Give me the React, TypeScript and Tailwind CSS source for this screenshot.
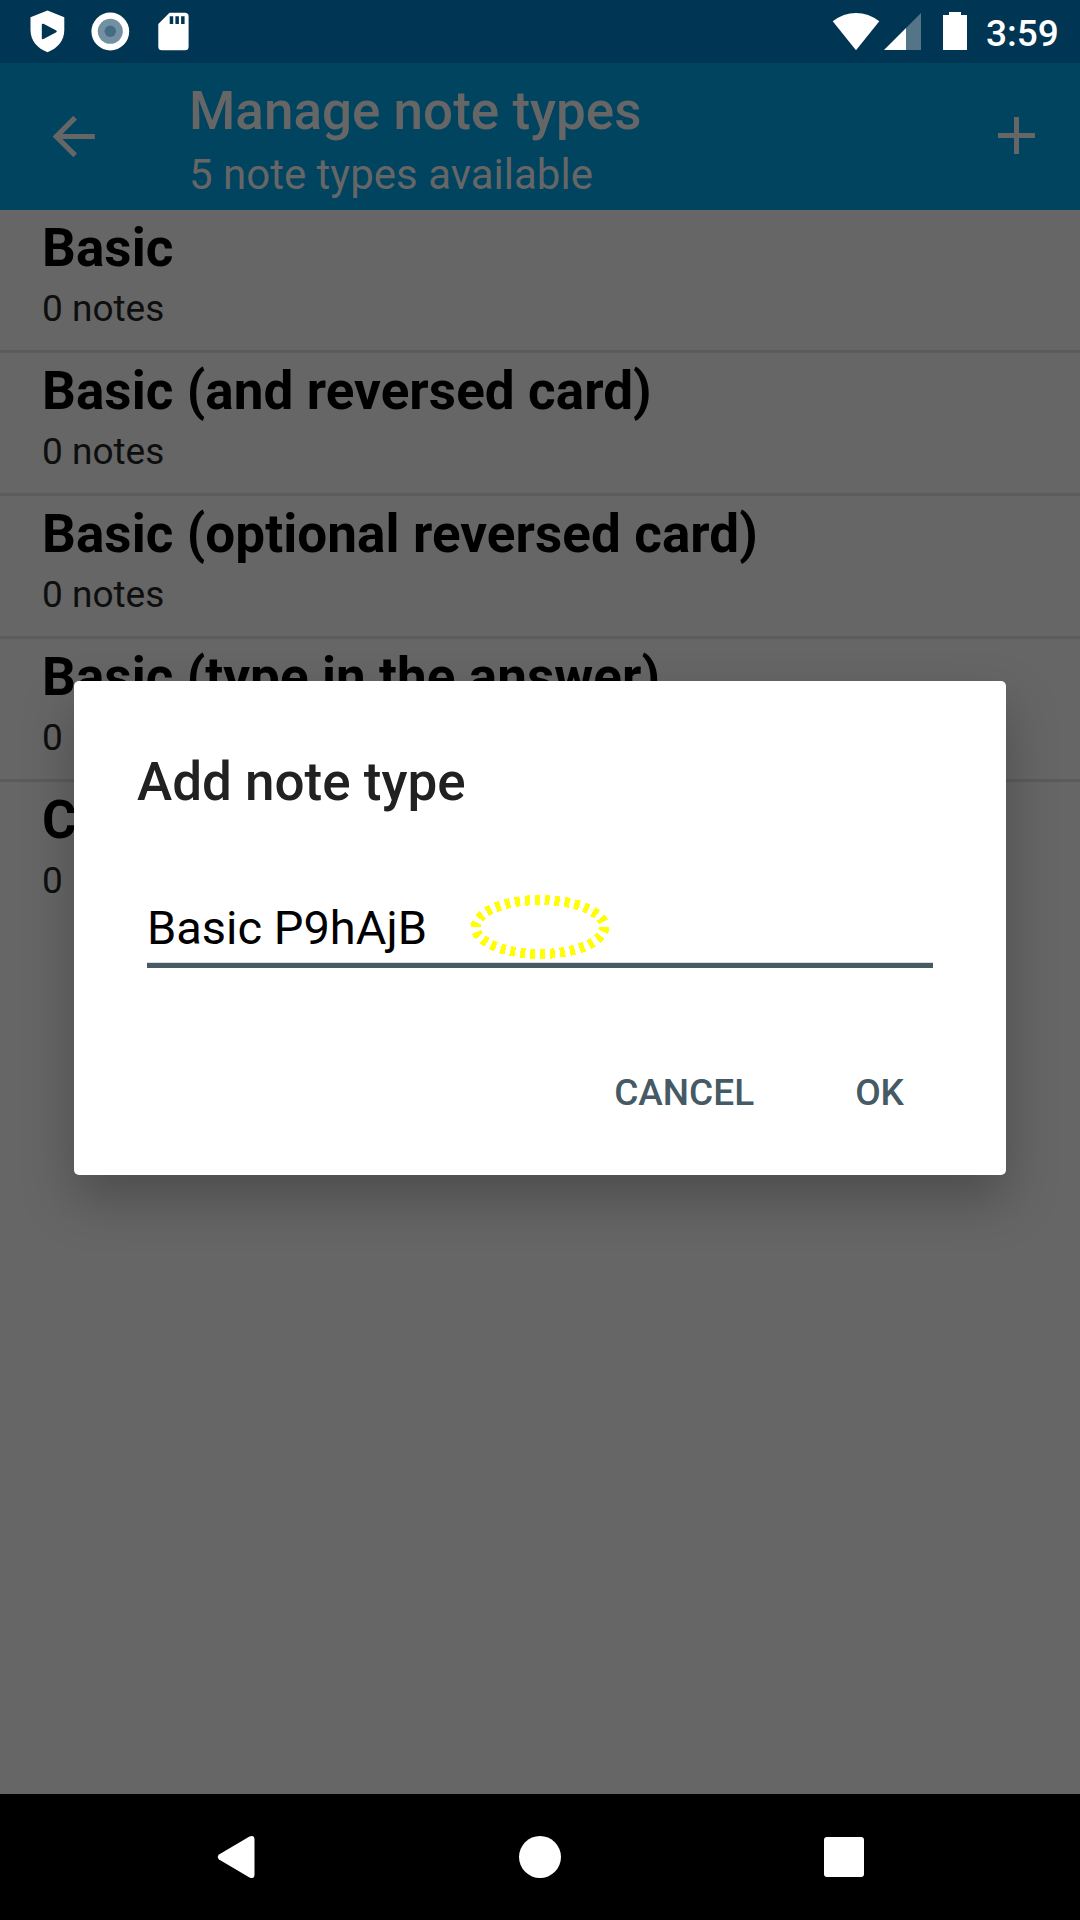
const noteTypes = [
  'Basic',
  'Basic (and reversed card)',
  'Basic (optional reversed card)',
  'Basic (type in the answer)',
  'Cloze',
];

function StatusBar() {
  return (
    <div className="flex h-[63px] shrink-0 items-center bg-[#003553] text-white">
      <svg className="h-[63px] w-[200px]" viewBox="0 0 200 63" fill="none">
        <path
          fillRule="evenodd"
          fill="#fff"
          d="M47.5 10.5 64.3 17.3V30C64.3 40.500 57.500 48.500 47.500 52.200C37.500 48.500 30.500 40.500 30.500 30V17.300ZM41.800 24.500V38.300Q42.200 39.500 43.500 39L56.300 32.300Q57.300 31.400 56.300 30.500L43.500 23.800Q42.200 23.300 41.800 24.500Z"
        />
        <circle cx="110.3" cy="31.500" r="18.900" fill="#fff" />
        <circle cx="110.3" cy="31.300" r="12.500" fill="#7290a2" />
        <circle cx="110.3" cy="31.300" r="5.700" fill="#456c84" />
        <path
          fillRule="evenodd"
          fill="#fff"
          d="M169.500 12.700H185Q188.600 12.700 188.600 16.300V46.700Q188.600 50.300 185 50.300H162Q158.300 50.300 158.300 46.700V24ZM169.700 16.300V24H173.200V16.300ZM175.400 16.300V24H178.900V16.300ZM181.100 16.300V24H184.600V16.300Z"
        />
      </svg>
      <svg className="ml-auto h-[63px] w-[140px]" viewBox="830 0 140 63">
        <path fill="#fff" d="M832.700 21.300Q843.500 13 856 13T879.300 21.300L856 50.300Z" />
        <path fill="#547588" d="M921 13V50H906V28Z" />
        <path fill="#fff" d="M884 50 906 28V50Z" />
        <path fill="#fff" d="M949 12H961V15H967V50H943V15H949Z" />
      </svg>
      <span className="ml-[16px] w-[94px] pt-[4px] text-[37px] leading-[43px] font-medium">3:59</span>
    </div>
  );
}

function AppBar() {
  return (
    <header className="flex h-[147px] shrink-0 bg-[#004460] text-[#666]">
      <svg className="h-[147px] w-[189px]" viewBox="0 63 189 147" fill="none" stroke="#666" strokeWidth="5.200">
        <path d="M94.800 136.500H58M75.200 117.600 56.300 136.500 75.200 155.400" />
      </svg>
      <div className="flex-1 pt-[20px]">
        <h1 className="h-[56px] text-[53px] leading-[56px] font-medium whitespace-nowrap">Manage note types</h1>
        <p className="text-[42px] leading-[71px] whitespace-nowrap">5 note types available</p>
      </div>
      <svg className="h-[147px] w-[100px]" viewBox="980 63 100 147">
        <path fill="#666" d="M1014 117H1019V133H1035V138H1019V154H1014V138H998V133H1014Z" />
      </svg>
    </header>
  );
}

function AddNoteTypeDialog() {
  return (
    <div
      role="dialog"
      className="absolute top-[681px] left-[74px] flex h-[494px] w-[932px] flex-col rounded-[5px] bg-white pt-[63px] shadow-[0_24px_52px_rgba(0,0,0,0.25)]"
    >
      <h2 className="pl-[63px] text-[53px] leading-[76px] font-medium text-[#212121]">Add note type</h2>
      <div className="relative mx-[73px] mt-[76px] h-[72px] border-b-[5px] border-[#455a64] shadow-[inset_0_-1px_0_#d9dddf]">
        <div className="text-[47px] leading-[64px] text-black">Basic P9hAjB</div>
        <svg
          className="absolute -top-px left-[313px] h-[64px] w-[160px]"
          viewBox="460 895 160 64"
          fill="none"
          shapeRendering="crispEdges"
        >
          <ellipse cx="540" cy="927" rx="64.500" ry="27" stroke="#ff0" strokeWidth="10" strokeDasharray="5 4.960" />
        </svg>
      </div>
      <div className="mt-[103px] flex justify-end pr-[102px] text-[37px] leading-[43px] font-medium text-[#455a64]">
        <button className="mr-[101px]">CANCEL</button>
        <button>OK</button>
      </div>
    </div>
  );
}

function NavigationBar() {
  return (
    <nav className="flex h-[126px] shrink-0 items-center bg-black">
      <svg className="h-[126px] w-[1080px]" viewBox="0 1794 1080 126" fill="#fff">
        <path d="M219 1854.500 249.500 1836.500Q254.500 1834.500 254.500 1839.500V1874.500Q254.500 1879.500 249.500 1877.500L219 1859.500Q216.500 1857 219 1854.500Z" />
        <circle cx="540" cy="1857" r="21" />
        <rect x="824" y="1837" width="40" height="40" rx="3" />
      </svg>
    </nav>
  );
}

export default function App() {
  return (
    <div className="relative flex h-[1920px] w-[1080px] flex-col overflow-hidden bg-[#666] font-['Roboto',sans-serif]">
      <StatusBar />
      <AppBar />
      <main className="flex-1">
        {noteTypes.map((name, i) => (
          <div
            key={name}
            className={
              i < noteTypes.length - 1
                ? 'h-[143px] border-b-[3px] border-[#5b5b5b] pl-[42px]'
                : 'h-[143px] pl-[42px]'
            }
          >
            <div className="text-[53px] leading-[76px] font-bold tracking-[0.08px] text-black">{name}</div>
            <div className="text-[37px] leading-[45px] text-[#0e0e0e]">0 notes</div>
          </div>
        ))}
      </main>
      <NavigationBar />
      <AddNoteTypeDialog />
    </div>
  );
}
